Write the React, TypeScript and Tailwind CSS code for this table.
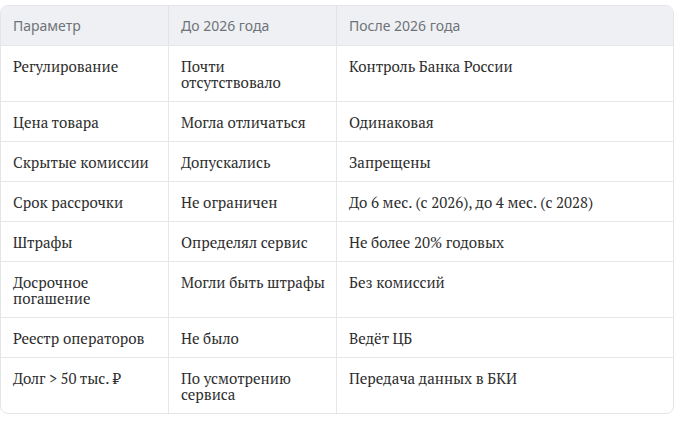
const ROWS: [string, string, string][] = [
  ['Регулирование', 'Почти отсутствовало', 'Контроль Банка России'],
  ['Цена товара', 'Могла отличаться', 'Одинаковая'],
  ['Скрытые комиссии', 'Допускались', 'Запрещены'],
  ['Срок рассрочки', 'Не ограничен', 'До 6 мес. (с 2026), до 4 мес. (с 2028)'],
  ['Штрафы', 'Определял сервис', 'Не более 20% годовых'],
  ['Досрочное погашение', 'Могли быть штрафы', 'Без комиссий'],
  ['Реестр операторов', 'Не было', 'Ведёт ЦБ'],
  ['Долг > 50 тыс. ₽', 'По усмотрению сервиса', 'Передача данных в БКИ'],
]

const HEAD = ['Параметр', 'До 2026 года', 'После 2026 года']

export default function App() {
  return (
    <div className="w-[685px] h-[426px] bg-white pt-[5px]">
      <div className="w-[674px] overflow-hidden rounded-lg border border-[#e3e5e8] bg-white">
        <div className="grid grid-cols-[168px_168px_1fr] bg-[#eef0f3] font-['Noto_Sans',sans-serif] text-[14px] leading-[16px] text-[#6f7378]">
          {HEAD.map((h, i) => (
            <div key={h} className={`pl-3 pr-[10px] pt-3 pb-[11px] ${i < 2 ? 'border-r border-[#e1e3e6]' : ''}`}>
              {h}
            </div>
          ))}
        </div>
        {ROWS.map((row) => (
          <div
            key={row[0]}
            className="grid grid-cols-[168px_168px_1fr] border-t border-[#e6e7ea] font-['PT_Serif','Liberation_Serif',serif] text-[15px] leading-[16px] text-[#2e2e2e]"
          >
            {row.map((cell, i) => (
              <div key={i} className={`pl-3 pr-[10px] pt-3 pb-[11px] ${i < 2 ? 'border-r border-[#e6e7ea]' : ''}`}>
                {cell}
              </div>
            ))}
          </div>
        ))}
      </div>
    </div>
  )
}
